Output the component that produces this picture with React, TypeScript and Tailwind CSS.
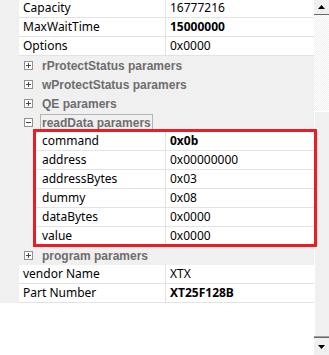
import React from 'react';

type Prop = { name: string; value: string; bold?: boolean };

const topProps: Prop[] = [
  { name: 'Capacity', value: '16777216' },
  { name: 'MaxWaitTime', value: '15000000', bold: true },
  { name: 'Options', value: '0x0000' },
];

const readDataProps: Prop[] = [
  { name: 'command', value: '0x0b', bold: true },
  { name: 'address', value: '0x00000000' },
  { name: 'addressBytes', value: '0x03' },
  { name: 'dummy', value: '0x08' },
  { name: 'dataBytes', value: '0x0000' },
  { name: 'value', value: '0x0000' },
];

const bottomProps: Prop[] = [
  { name: 'vendor Name', value: 'XTX' },
  { name: 'Part Number', value: 'XT25F128B', bold: true },
];

function PropRow({ p, child }: { p: Prop; child?: boolean }) {
  return (
    <div className="flex h-[19px] shrink-0">
      <div className={child ? 'w-[36px] bg-[#f0f0f0]' : 'w-[19px] bg-[#f0f0f0]'} />
      <div
        className={
          (child ? 'w-[130px] pl-[6px]' : 'w-[147px] pl-[4px]') +
          ' flex items-center border-r border-b border-[#e3e3e3] bg-white text-black'
        }
      >
        {p.name}
      </div>
      <div
        className={
          'flex flex-1 items-center border-b border-[#e3e3e3] bg-white pl-[4px] text-black ' +
          (p.bold ? 'font-bold' : '')
        }
      >
        {p.value}
      </div>
    </div>
  );
}

function Expander({ open }: { open?: boolean }) {
  return (
    <div className="relative h-[9px] w-[9px] shrink-0 border border-[#919191] bg-white">
      <div className="absolute left-[1px] top-[3px] h-px w-[5px] bg-[#3c4a5c]" />
      {!open && <div className="absolute left-[3px] top-[1px] h-[5px] w-px bg-[#3c4a5c]" />}
    </div>
  );
}

function GroupRow({ label, open, focused }: { label: string; open?: boolean; focused?: boolean }) {
  return (
    <div className="flex h-[19px] shrink-0 items-center bg-[#f0f0f0]">
      <div className="ml-[24px]">
        <Expander open={open} />
      </div>
      <span
        className={
          "ml-[7px] flex h-[17px] items-center border px-px font-['Liberation_Sans',sans-serif] text-[12px] font-bold text-[#6d6d6d] " +
          (focused ? 'border-[#b4b4b4]' : 'border-transparent')
        }
      >
        {label}
      </span>
    </div>
  );
}

function ScrollBar() {
  return (
    <div className="flex w-[15px] shrink-0 flex-col bg-[#f0f0f0]">
      {/* up button, cropped at top */}
      <div className="flex h-[15px] shrink-0 items-center justify-center border-b border-[#696969] bg-[#f0f0f0]">
        <svg width="7" height="4" viewBox="0 0 7 4">
          <path d="M3.5 0 L7 4 L0 4 Z" fill="#000" />
        </svg>
      </div>
      <div className="h-[96px] shrink-0 bg-[repeating-conic-gradient(#ffffff_0_25%,#f0f0f0_0_50%)] bg-[length:2px_2px]" />
      <div className="flex-1 border-t border-l border-white bg-[#f0f0f0]" />
      <div className="h-px shrink-0 bg-[#a0a0a0]" />
      <div className="h-px shrink-0 bg-[#696969]" />
      <div className="flex h-[17px] shrink-0 items-center justify-center bg-[#f0f0f0]">
        <svg width="7" height="4" viewBox="0 0 7 4">
          <path d="M0 0 L7 0 L3.5 4 Z" fill="#000" />
        </svg>
      </div>
    </div>
  );
}

export default function App() {
  return (
    <div className="relative flex h-[355px] w-[329px] overflow-hidden bg-white font-['Noto_Sans',sans-serif] text-[12px] leading-none">
      <div className="mt-[-1px] flex w-[314px] flex-col">
        {topProps.map((p) => (
          <PropRow key={p.name} p={p} />
        ))}
        <GroupRow label="rProtectStatus paramers" />
        <GroupRow label="wProtectStatus paramers" />
        <GroupRow label="QE paramers" />
        <GroupRow label="readData paramers" open focused />
        {readDataProps.map((p) => (
          <PropRow key={p.name} p={p} child />
        ))}
        <GroupRow label="program paramers" />
        {bottomProps.map((p) => (
          <PropRow key={p.name} p={p} />
        ))}
        <div className="flex-1 bg-white" />
      </div>
      <ScrollBar />

      {/* red annotation box */}
      <div className="pointer-events-none absolute left-[33px] top-[129px] h-[118px] w-[284px] border-[3px] border-[#ed1c24]" />
    </div>
  );
}
